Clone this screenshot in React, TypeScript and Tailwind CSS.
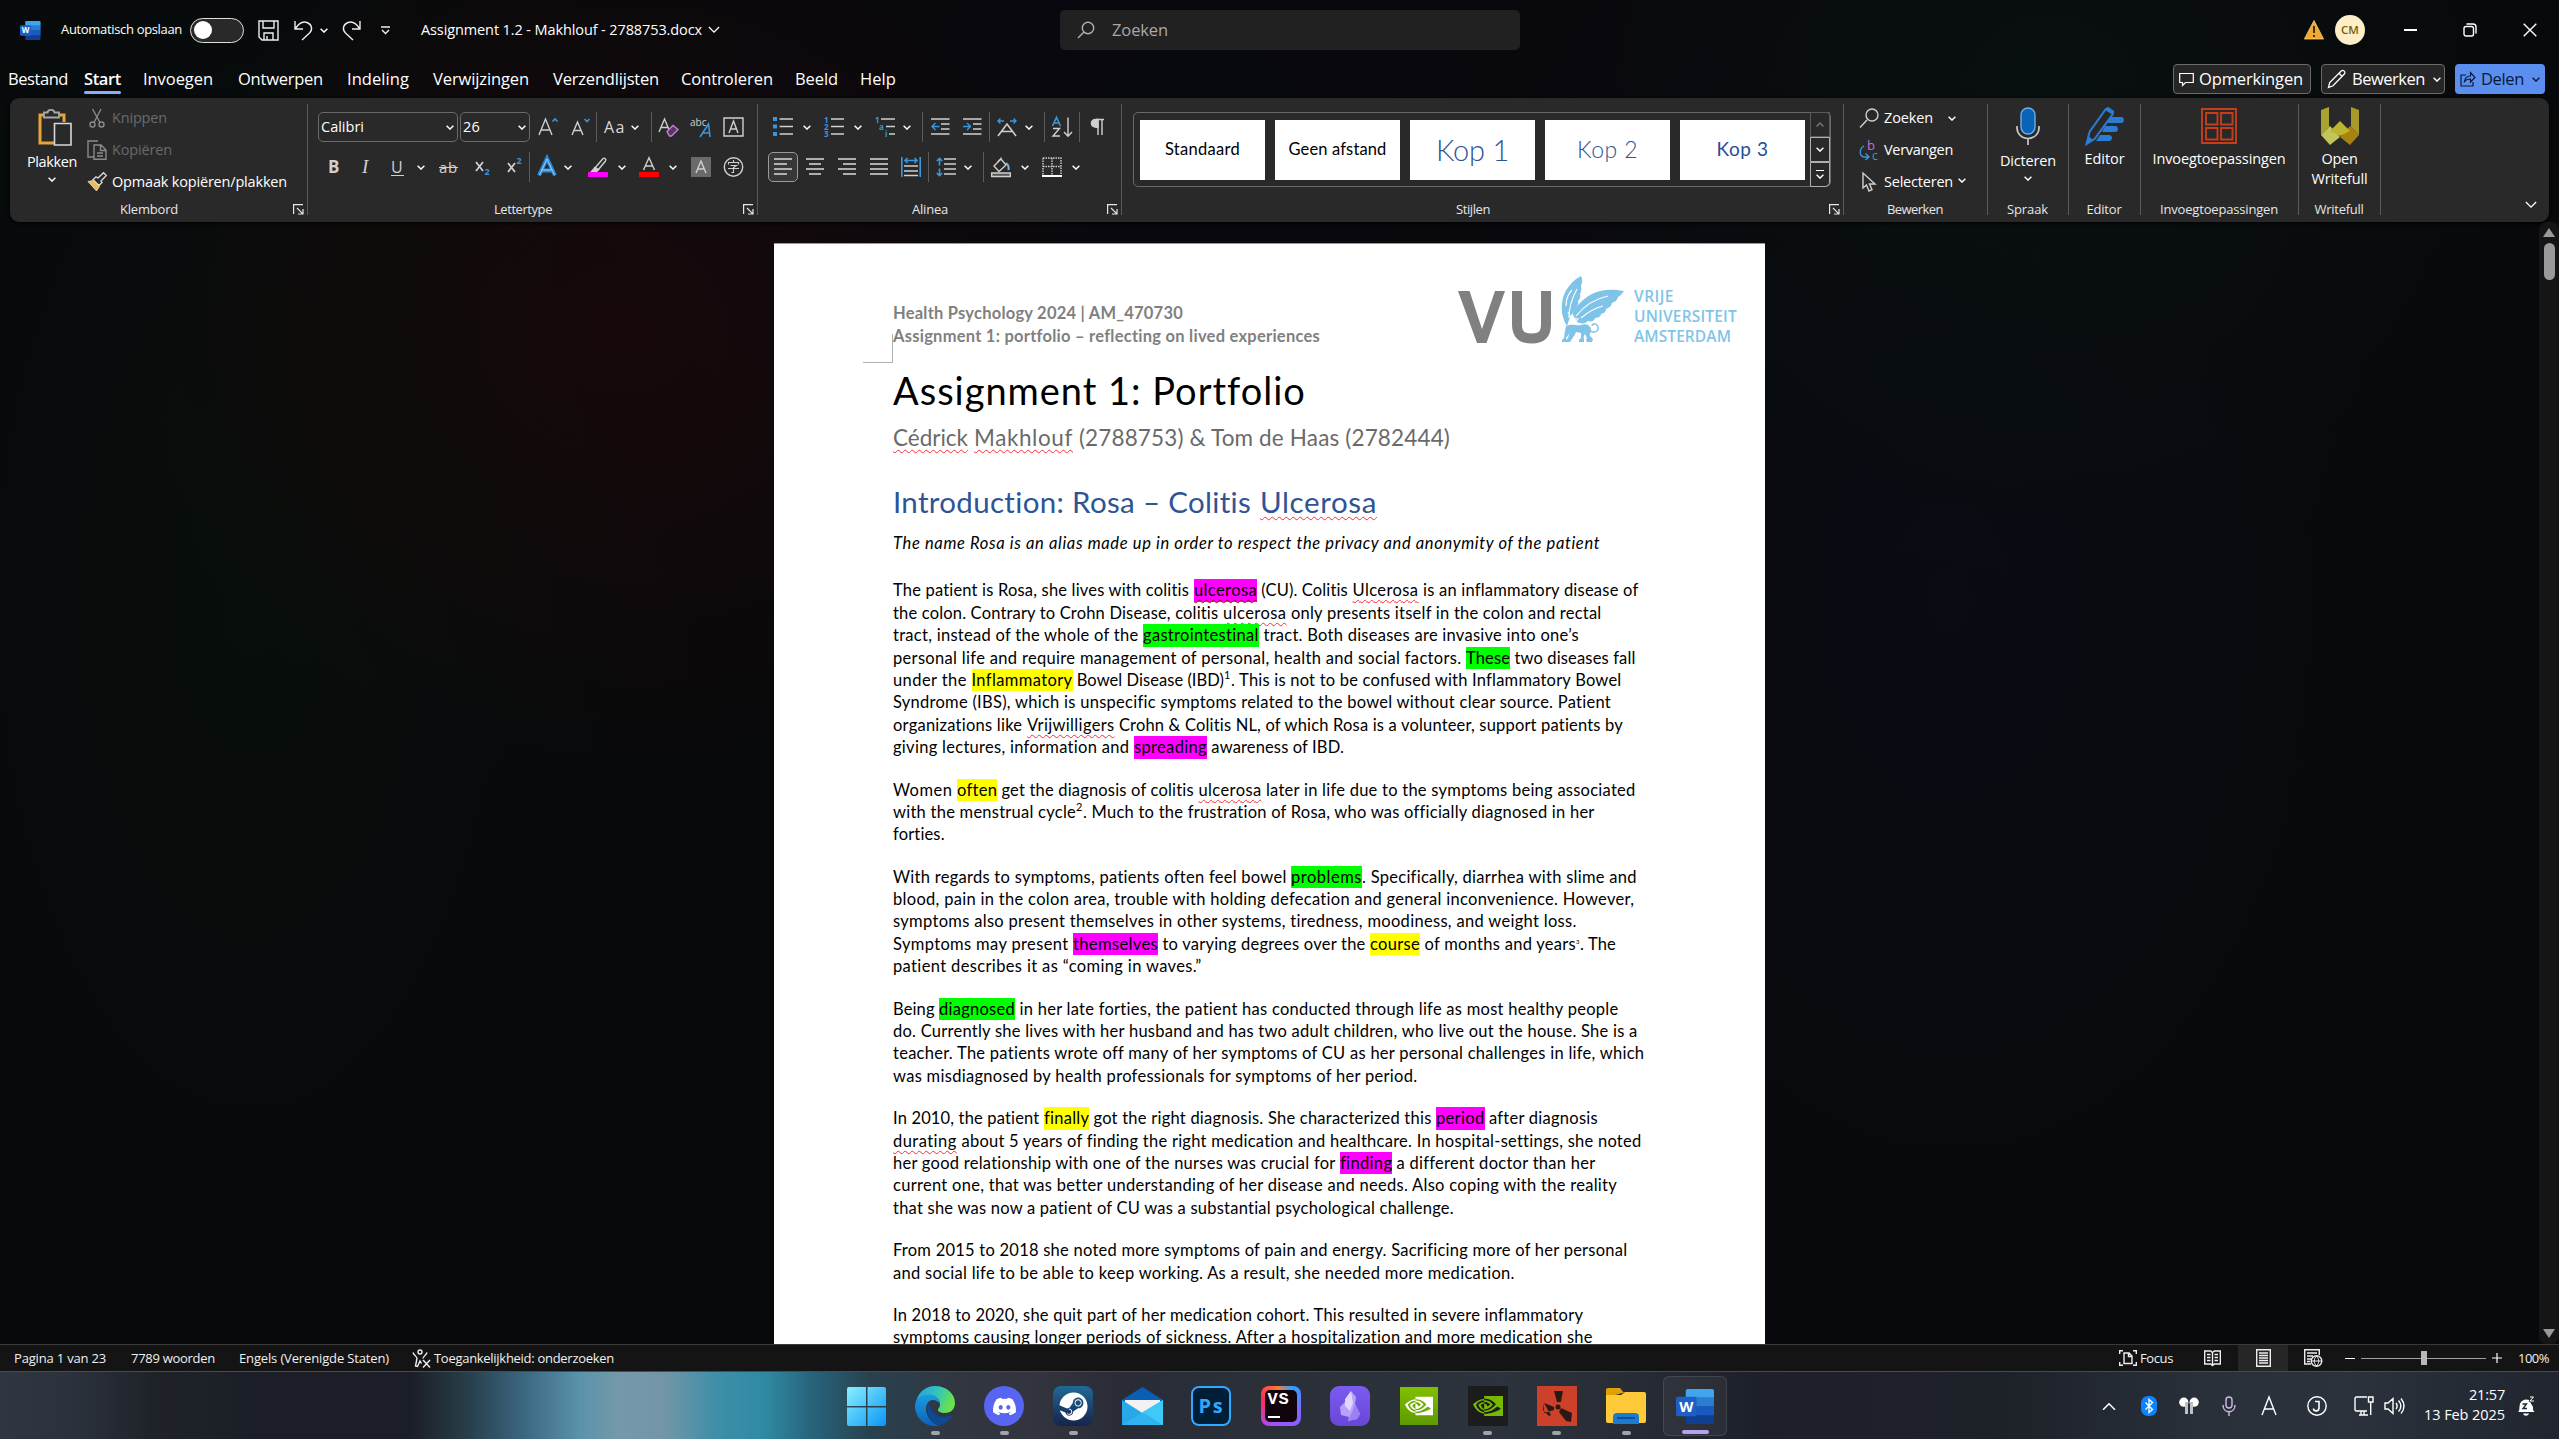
import { useLayoutEffect, useRef, type ReactNode } from "react";
import { FaDiscord, FaSteam } from "react-icons/fa";
import { SiNvidia } from "react-icons/si";

const UI = "font-['Open_Sans','Noto_Sans',sans-serif]";
const DOC = "font-[Lato,'Open_Sans',sans-serif]";

/** Text set to an exact advance width by adjusting its tracking. */
function Fit({ w, className = "", children }: { w: number; className?: string; children: string }) {
  const ref = useRef<HTMLSpanElement>(null);
  useLayoutEffect(() => {
    const el = ref.current;
    if (!el) return;
    el.style.letterSpacing = "0px";
    const natural = el.getBoundingClientRect().width;
    el.style.letterSpacing = `${(w - natural) / children.length}px`;
  }, [w, children]);
  return (
    <span className={`block shrink-0 whitespace-pre ${className}`} style={{ width: w }}>
      <span ref={ref}>{children}</span>
    </span>
  );
}

function Chev({ className = "", up = false, w = 8 }: { className?: string; up?: boolean; w?: number }) {
  return (
    <svg className={`shrink-0 ${className}`} width={w} height={(w * 5) / 8} viewBox="0 0 8 5" fill="none" stroke="currentColor" strokeWidth={w > 10 ? 0.9 : 1.4}>
      <path d={up ? "M0.6 4.4 4 1l3.4 3.4" : "M0.6 0.7 4 4.1 7.4.7"} />
    </svg>
  );
}

function Svg({ w = 20, h = 20, vb, className = "", children }: { w?: number; h?: number; vb?: string; className?: string; children: ReactNode }) {
  return (
    <svg className={`shrink-0 overflow-visible ${className}`} width={w} height={h} viewBox={vb ?? `0 0 ${w} ${h}`} fill="none" stroke="#d0d0d0" strokeWidth="1.4">
      {children}
    </svg>
  );
}

function Rule({ className = "" }: { className?: string }) {
  return <div className={`h-[30px] w-px shrink-0 bg-[#5c5c5c] ${className}`} />;
}

function Launcher() {
  return (
    <svg className="absolute right-[3px] bottom-[7px]" width="11" height="11" viewBox="0 0 11 11" fill="none" stroke="#e8e8e8" strokeWidth="1.2">
      <path d="M.6 10V.6H10M4 4l5.6 5.6M10 5v5H5" />
    </svg>
  );
}

function Group({ className, label, lw, launcher = false, children }: { className: string; label: string; lw: number; launcher?: boolean; children: ReactNode }) {
  return (
    <>
      <div className={`relative flex h-[124px] shrink-0 flex-col ${className}`}>
        <div className="h-[102px]">{children}</div>
        <div className={`flex h-[20px] items-center justify-center ${launcher ? "pr-[19px]" : "pr-[1px]"}`}>
          <Fit w={lw} className="text-[13px] text-[#e6e6e6]">{label}</Fit>
        </div>
        {launcher && <Launcher />}
      </div>
      <div className="mt-[6px] h-[111px] w-px shrink-0 bg-[#5a5a5a]" />
    </>
  );
}

function WordLogo({ size }: { size: number }) {
  return (
    <svg className="shrink-0" width={size} height={size} viewBox="0 0 40 40">
      <rect x="10" y="2" width="29" height="36" rx="2" fill="#103f91" />
      <path d="M12 2h25a2 2 0 0 1 2 2v7H10V4a2 2 0 0 1 2-2Z" fill="#41a5ee" />
      <path d="M10 11h29v9H10z" fill="#2b7cd3" />
      <path d="M10 20h29v9H10z" fill="#185abd" />
      <rect x="0" y="10" width="21" height="20" rx="2" fill="#1f5fc4" />
      <text x="10.5" y="25.6" textAnchor="middle" fill="#fff" fontFamily="Open Sans" fontWeight="700" fontSize="15">W</text>
    </svg>
  );
}

function TitleBar() {
  return (
    <div className="flex h-[60px] shrink-0 items-center text-white">
      <div className="ml-[20px]"><WordLogo size={21} /></div>
      <Fit w={121} className="ml-[20px] text-[13px]">Automatisch opslaan</Fit>
      <div className="ml-[8px] flex h-[25px] w-[54px] shrink-0 items-center rounded-full border border-[#e0e0e0] bg-[#292929] pl-[3px]">
        <div className="size-[18px] rounded-full bg-white" />
      </div>
      <Svg className="ml-[14px]" w={21} h={21}>
        <path stroke="#eee" d="M1 1h19v19H4l-3-3zM5 1v7h11V1M6 20v-7h9v7M9 20v-4" />
      </Svg>
      <Svg className="ml-[15px]" w={20} h={21}>
        <path stroke="#eee" d="M1 1v8h8M1.500 8.500C5 3 9 1 13 2.500c5 2 6 7 2.500 10.500L8 20" />
      </Svg>
      <Chev className="ml-[6px]" />
      <Svg className="ml-[14px]" w={20} h={21}>
        <path stroke="#eee" d="M18 1v8h-8M17.500 8.500C14 3 10 1 6 2.500c-5 2-6 7-2.500 10.500L11 20" />
      </Svg>
      <Svg className="ml-[19px]" w={9} h={9}>
        <path stroke="#eee" d="M0 1h9M1 4l3.500 3.500L8 4" />
      </Svg>
      <Fit w={281} className="ml-[31px] text-[14.5px]">Assignment 1.2 - Makhlouf - 2788753.docx</Fit>
      <Chev className="ml-[6px]" w={12} />
      <div className="ml-[340px] flex h-[40px] w-[460px] shrink-0 items-center rounded-[5px] bg-[#212121]">
        <Svg className="ml-[17px]" w={18} h={18}>
          <path stroke="#b0b0b0" d="M7 11 1 17" /><circle cx="11" cy="7" r="5.700" stroke="#b0b0b0" />
        </Svg>
        <Fit w={56} className="ml-[17px] text-[16.5px] text-[#a8a8a8]">Zoeken</Fit>
      </div>
      <svg className="ml-[784px] shrink-0" width="20" height="20" viewBox="0 0 20 20">
        <path d="M10 .5 19.600 19H.4z" fill="#f0a830" stroke="#f8d080" strokeWidth=".8" />
        <path d="M10 6v7M10 15v2" stroke="#4a3000" strokeWidth="2" />
      </svg>
      <div className="ml-[11px] flex size-[30px] shrink-0 items-center justify-center rounded-full bg-[#fdeec8]">
        <Fit w={18} className="text-[11.5px] font-semibold text-[#7a5b00]">CM</Fit>
      </div>
      <div className="ml-[39px] h-[1.5px] w-[13px] shrink-0 bg-white" />
      <Svg className="ml-[46px]" w={14} h={14}>
        <rect x="1" y="3.500" width="9.500" height="9.500" rx="2" stroke="#fff" />
        <path stroke="#fff" d="M3.500 1H10c2 0 3 1 3 3v6.500" />
      </Svg>
      <Svg className="ml-[46px]" w={14} h={14}><path stroke="#fff" d="m.7.7 12.600 12.600M13.300.7.7 13.300" /></Svg>
    </div>
  );
}

function TabBar() {
  return (
    <div className="flex h-[38px] shrink-0 items-center text-[16.5px] text-white">
      <Fit w={60} className="ml-[8px] pt-[1px]">Bestand</Fit>
      <div className="relative ml-[16px] pt-[1px]">
        <Fit w={37} className="font-semibold">Start</Fit>
        <div className="absolute -bottom-[2px] left-0 h-[3px] w-[37px] rounded-full bg-[#86aefa]" />
      </div>
      <Fit w={70} className="ml-[22px] pt-[1px]">Invoegen</Fit>
      <Fit w={85} className="ml-[25px] pt-[1px]">Ontwerpen</Fit>
      <Fit w={62} className="ml-[24px] pt-[1px]">Indeling</Fit>
      <Fit w={96} className="ml-[24px] pt-[1px]">Verwijzingen</Fit>
      <Fit w={106} className="ml-[24px] pt-[1px]">Verzendlijsten</Fit>
      <Fit w={92} className="ml-[22px] pt-[1px]">Controleren</Fit>
      <Fit w={43} className="ml-[22px] pt-[1px]">Beeld</Fit>
      <Fit w={36} className="ml-[22px] pt-[1px]">Help</Fit>
      <div className="ml-auto flex gap-[10px] pr-[14px]">
        <div className="flex h-[30px] w-[138px] items-center rounded-[4px] border border-[#6a6a6a] bg-[#262626]">
          <Svg className="ml-[5px]" w={15} h={15}><path stroke="#fff" strokeWidth="1.2" d="M.7 1.500h13.600v9H6.500L3.500 13.500v-3H.7z" /></Svg>
          <Fit w={104} className="ml-[5px]">Opmerkingen</Fit>
        </div>
        <div className="flex h-[30px] w-[124px] items-center rounded-[4px] border border-[#6a6a6a] bg-[#262626]">
          <Svg className="ml-[5px]" w={20} h={20}><path stroke="#fff" strokeWidth="1.3" d="m1.500 18.500 1.200-5L14 2.200c1-1 2.300-1 3.200-.1s.9 2.200-.1 3.200L6 16.800zM12 4.300l3.500 3.400" /></Svg>
          <Fit w={73} className="ml-[5px]">Bewerken</Fit>
          <Chev className="ml-[8px]" />
        </div>
        <div className="flex h-[30px] w-[90px] items-center rounded-[4px] bg-[#5b8fef] text-[#0a1a38]">
          <Svg className="ml-[5px]" w={16} h={16}><path stroke="#0a1a38" strokeWidth="1.2" d="M6 4H1v11h12V11M4.500 10.500c.5-4 3-5.500 6-5.500V1.500l4.500 5-4.500 4.500V8C8 8 6 8.500 4.500 10.500z" /></Svg>
          <Fit w={43} className="ml-[5px]">Delen</Fit>
          <Chev className="ml-[8px]" />
        </div>
      </div>
    </div>
  );
}

function Clipboard() {
  return (
    <div className="flex h-full">
      <div className="ml-[14px] flex w-[56px] flex-col items-center pt-[10px] text-white">
        <Svg w={35} h={38} className="ml-[4px]">
          <path d="M3 7h8M20 7h7v7M3 5.500V35h14" stroke="#e8a33d" strokeWidth="3" />
          <path d="M7 4.500h3.500C11 1 17 1 17.500 4.500H22V9.500H7z" fill="#292929" stroke="#a8a8a8" strokeWidth="1.800" />
          <path d="M17.500 15.500H34V37H17.500z" fill="#292929" stroke="#d8d8d8" strokeWidth="1.600" />
        </Svg>
        <Fit w={50} className="mt-[6px] text-[14.5px] leading-[20px]">Plakken</Fit>
        <Chev className="mt-[5px]" />
      </div>
      <div className="ml-[7px] flex flex-col pt-[4px] text-[14.5px]">
        <div className="flex h-[32px] items-center">
          <Svg><path stroke="#8a8a8a" d="M5.500 1 13 14.500M14 1 7 14.500" /><circle cx="5.500" cy="16.500" r="2.500" stroke="#8a8a8a" /><circle cx="14.500" cy="16.500" r="2.500" stroke="#8a8a8a" /></Svg>
          <Fit w={55} className="ml-[5px] text-[#6a6a6a]">Knippen</Fit>
        </div>
        <div className="flex h-[32px] items-center">
          <Svg><path stroke="#8a8a8a" d="M7 17H1V1h10M7 5h7l5 5v9.300H7zM13.500 5v5.500H19M10 13h6M10 16h6" /></Svg>
          <Fit w={60} className="ml-[5px] text-[#6a6a6a]">Kopiëren</Fit>
        </div>
        <div className="flex h-[32px] items-center">
          <Svg><path stroke="#d8d8d8" fill="#292929" d="m11 6 5.500-5.200 2.800 2.800L14 9l1 1.500-3 3L6 7.800l3-3z" /><path d="m1 9.500 5.500-1 6 6L9.500 19z" fill="#f0b95a" stroke="#e8e0d0" strokeWidth=".8" /></Svg>
          <Fit w={175} className="ml-[5px] text-white">Opmaak kopiëren/plakken</Fit>
        </div>
      </div>
    </div>
  );
}

function FontGroup() {
  return (
    <div className="pt-[14px] text-white">
      <div className="flex h-[30px] items-center text-[14.5px]">
        <div className="ml-[10px] flex h-[30px] w-[140px] shrink-0 items-center rounded-[5px] border border-[#6a6a6a] pr-[3px] pl-[2px]">
          <Fit w={43}>Calibri</Fit><Chev className="ml-auto" />
        </div>
        <div className="ml-[2px] flex h-[30px] w-[70px] shrink-0 items-center rounded-[5px] border border-[#6a6a6a] pr-[3px] pl-[2px]">
          <Fit w={17}>26</Fit><Chev className="ml-auto" />
        </div>
        <Svg className="ml-[8px]"><path d="m1 18 6.500-16L14 18M3 13h9" /><path d="M14.500 4.500 17 2l2.500 2.500" stroke="#3a96dd" strokeWidth="1.600" /></Svg>
        <Svg className="ml-[13px]"><path d="m1 18 5.500-13L12 18M3 13.500h7" /><path d="M13.500 2 16 4.500 18.500 2" stroke="#3a96dd" strokeWidth="1.600" /></Svg>
        <Rule className="ml-[5px]" />
        <Fit w={22} className="ml-[7px] text-[16px] text-[#d8d8d8]">Aa</Fit>
        <Chev className="ml-[5px]" />
        <Rule className="ml-[12px]" />
        <Svg className="ml-[6px]" w={22}><path d="m1 15 5.500-13L12 15M3 10.500h7" /><path d="m9 14.500 6-6 5 4-6.500 6.500h-2z" stroke="#c77dd6" fill="#5a3562" /></Svg>
        <Svg className="ml-[10px]" w={22}>
          <text x="0" y="9" fontSize="10" fill="#d0d0d0" stroke="none" fontFamily="Open Sans">abc</text>
          <path d="m10 20 8.500-13 1.500 13M13 16h7" stroke="#3a96dd" strokeWidth="1.600" />
        </Svg>
        <Svg className="ml-[11px]" w={21}><path d="M1 1h19v18H1zM6 16l4.500-12L15 16M7.500 12h6" /></Svg>
      </div>
      <div className="mt-[10px] flex h-[30px] items-center text-[18px] text-[#d0d0d0]">
        <Fit w={11} className="ml-[20px] text-[17px] font-bold">B</Fit>
        <span className="ml-[23px] w-[9px] font-['Liberation_Serif',serif] text-[19px] italic">I</span>
        <Fit w={13} className="ml-[20px] text-[16px] underline underline-offset-2">U</Fit>
        <Chev className="ml-[13px] text-white" />
        <Fit w={19} className="ml-[14px] text-[15px] line-through">ab</Fit>
        <Svg className="ml-[17px]"><path d="m1 5 7 9M8 5l-7 9" strokeWidth="1.800" /><text x="9.500" y="18" fontSize="9" fill="#3a96dd" stroke="none" fontFamily="Open Sans" fontWeight="700">2</text></Svg>
        <Svg className="ml-[12px]"><path d="m1 6 7 9M8 6l-7 9" strokeWidth="1.800" /><text x="9.500" y="7" fontSize="9" fill="#3a96dd" stroke="none" fontFamily="Open Sans" fontWeight="700">2</text></Svg>
        <Rule className="ml-[2px]" />
        <Svg className="ml-[7px]"><path d="m2 18.500 8-17 8 17M5 13.500h10" stroke="#2b88d8" strokeWidth="4" /><path d="m2.500 18 7.500-16 7.500 16M5 13h10" stroke="#9fd0f5" strokeWidth="1" /></Svg>
        <Chev className="ml-[7px] text-white" />
        <Svg className="ml-[16px]"><path d="m7 11 8-9.500c1.500-1 3.500.5 2.500 2.500L10 13z" /><path d="m7 10.500-3.500 4h5l2-1.800z" fill="#d0d0d0" /><path d="M0 15h20v5H0z" fill="#f0f" stroke="none" /></Svg>
        <Chev className="ml-[10px] text-white" />
        <Svg className="ml-[13px]"><path d="M4.500 13 10 .8 15.500 13M6.500 9h7" /><path d="M0 15h20v5H0z" fill="red" stroke="none" /></Svg>
        <Chev className="ml-[10px] text-white" />
        <Svg className="ml-[14px]"><path d="M0 0h20v20H0z" fill="#6a6a6a" stroke="none" /><path d="m5 16 5-12 5 12M7 12h6" /></Svg>
        <Svg className="ml-[12px]" w={21}>
          <circle cx="10.500" cy="10" r="9.200" /><path strokeWidth="1.100" d="M10.500 3v2.500M5.500 7.500v-2h10v2M7.500 8.500h6l-3 2V15.500H8.500M5 11.500h11" />
        </Svg>
      </div>
    </div>
  );
}

function Lines({ rows, className = "" }: { rows: [number, number][]; className?: string }) {
  return (
    <Svg w={18} h={20} className={className}>
      {rows.map(([a, b], i) => <path key={i} d={`M${a} ${2 + i * 5}H${b}`} strokeWidth="1.600" />)}
    </Svg>
  );
}

function ParagraphGroup() {
  const num = { fontFamily: "Open Sans", fontWeight: 700, fontSize: 8, fill: "#3a96dd", stroke: "none" } as const;
  return (
    <div className="pt-[14px] text-white">
      <div className="flex h-[30px] items-center">
        <Svg className="ml-[15px]"><path d="M6.500 2H20M6.500 9.500H20M6.500 17H20" /><path d="M0 0h4v4H0zM0 7.500h4v4H0zM0 15h4v4H0z" fill="#3a96dd" stroke="none" /></Svg>
        <Chev className="ml-[10px]" />
        <Svg className="ml-[13px]"><path d="M7 2h13M7 9.500h13M7 17h13" /><text x="0" y="5.500" {...num}>1</text><text x="0" y="12.500" {...num}>2</text><text x="0" y="20" {...num}>3</text></Svg>
        <Chev className="ml-[10px]" />
        <Svg className="ml-[13px]"><path d="M6 2h14M11 9.500h9M14 17h6" /><text x="0" y="5.500" {...num}>1</text><text x="4" y="12.500" {...num}>a</text><text x="10" y="20" {...num}>i</text></Svg>
        <Chev className="ml-[8px]" />
        <Rule className="ml-[11px]" />
        <Svg className="ml-[8px]" w={19}><path d="M0 2h18.500M10 7h8.500M10 12h8.500M0 17h18.500" /><path d="M8.500 9.500H1M4.500 6 1 9.500 4.500 13" stroke="#3a96dd" /></Svg>
        <Svg className="ml-[13px]" w={19}><path d="M0 2h18.500M10 7h8.500M10 12h8.500M0 17h18.500" /><path d="M0 9.500h7.500M4 6l3.500 3.500L4 13" stroke="#3a96dd" /></Svg>
        <Rule className="ml-[7px]" />
        <Svg className="ml-[7px]"><path d="M1 19 10 7l9 12M5 14.500h10" strokeWidth="1.600" /><path d="M7 4H1M3.500 1.500 1 4l2.500 2.500M13 4h6M16.500 1.500 19 4l-2.500 2.500" stroke="#3a96dd" /></Svg>
        <Chev className="ml-[8px]" />
        <Rule className="ml-[11px]" />
        <Svg className="ml-[7px]"><path d="m.5 9 4-8.500 4 8.500M2 6h5" stroke="#3a96dd" strokeWidth="1.600" /><path d="M1 11.500h6.500L1 19h7M16 .5V19M12 15l4 4.200 4-4.200" /></Svg>
        <Rule className="ml-[7px]" />
        <Svg className="ml-[10px]" w={14}><path d="M6 2.500h8M8 2.500V18M12 2.500V18" /><path d="M8 2.500v8C-.5 10.500-.5 2.500 6 2.500z" fill="#d0d0d0" /></Svg>
      </div>
      <div className="mt-[10px] flex h-[30px] items-center">
        <div className="ml-[10px] flex size-[30px] shrink-0 items-center justify-center rounded-[5px] border border-[#9a9a9a] bg-[#383838]">
          <Lines rows={[[0, 18], [0, 13], [0, 18], [0, 13]]} />
        </div>
        <Lines className="ml-[8px]" rows={[[0, 18], [3, 15], [0, 18], [3, 15]]} />
        <Lines className="ml-[14px]" rows={[[0, 18], [5, 18], [0, 18], [5, 18]]} />
        <Lines className="ml-[14px]" rows={[[0, 18], [0, 18], [0, 18], [0, 18]]} />
        <Svg className="ml-[13px]"><path d="M3 9h14M3 14h14M3 18.500h14" /><path d="M.8 0v20M19.200 0v20M4 3.500h12M6.500 1 4 3.500 6.500 6M13.500 1 16 3.500 13.500 6" stroke="#3a96dd" strokeWidth="1.600" /></Svg>
        <Rule className="ml-[7px]" />
        <Svg className="ml-[7px]"><path d="M8 2h12M8 7h12M8 12h12M8 17h12" /><path d="M3.500 1.500v7M3.500 11.500v7M.8 4l2.700-2.700L6.200 4M.8 16l2.700 2.700L6.200 16" stroke="#3a96dd" strokeWidth="1.600" /></Svg>
        <Chev className="ml-[8px]" />
        <Rule className="ml-[11px]" />
        <Svg className="ml-[7px]"><path d="m3 9 7-7 5 6-7 6.500zM10 2V.5M6.500 5l3-3" /><path d="M15 6c3 2 3 4 2.500 7" stroke="#7ab8e8" strokeWidth="2" /><path d="M.7 16h18.600v3.500H.7z" fill="#555" /></Svg>
        <Chev className="ml-[10px]" />
        <Svg className="ml-[13px]"><path d="M1 1h18v17M1 1v17M10 1v17M1 9.500h18" strokeDasharray="1.500 1" /><path d="M0 19h20" strokeWidth="2" stroke="#fff" /></Svg>
        <Chev className="ml-[10px]" />
      </div>
    </div>
  );
}

function StyleTile({ className, w, children }: { className: string; w: number; children: string }) {
  return (
    <div className="flex h-[60px] w-[125px] shrink-0 items-center justify-center bg-white">
      <Fit w={w} className={className}>{children}</Fit>
    </div>
  );
}

function StylesGroup() {
  return (
    <div className="pt-[14px] pl-[11px]">
      <div className={`flex h-[75px] w-[698px] items-center gap-[10px] rounded-[5px] border border-[#6a6a6a] pl-[6px] ${DOC}`}>
        <StyleTile w={75} className="text-[16.5px] text-black">Standaard</StyleTile>
        <StyleTile w={98} className="text-[16.5px] text-black">Geen afstand</StyleTile>
        <StyleTile w={73} className="text-[29px] font-light text-[#2f5496]">Kop 1</StyleTile>
        <StyleTile w={61} className="text-[23px] font-light text-[#2f5496]">Kop 2</StyleTile>
        <StyleTile w={52} className="text-[19px] text-[#1f4e9a]">Kop 3</StyleTile>
        <div className="-ml-[5px] flex h-[75px] w-[20px] flex-col text-white">
          <div className="flex h-[25px] items-center justify-center border border-[#5a5a5a] text-[#777]"><Chev up /></div>
          <div className="flex h-[25px] items-center justify-center border border-[#b0b0b0]"><Chev /></div>
          <div className="flex h-[25px] flex-col items-center justify-center gap-[3px] rounded-br-[5px] border border-[#b0b0b0]">
            <div className="h-px w-[8px] bg-white" /><Chev />
          </div>
        </div>
      </div>
    </div>
  );
}

function EditGroup() {
  return (
    <div className="flex flex-col pt-[4px] pl-[15px] text-[14.5px] text-white">
      <div className="flex h-[32px] items-center">
        <Svg><path d="M8 12 1 19.500" /><circle cx="13" cy="7" r="6" /></Svg>
        <Fit w={49} className="ml-[5px]">Zoeken</Fit><Chev className="ml-[15px]" />
      </div>
      <div className="flex h-[32px] items-center">
        <Svg>
          <text x="8" y="10" fontSize="13" fill="#c470cf" stroke="none" fontFamily="Open Sans">b</text>
          <text x="13" y="20" fontSize="12" fill="#3a96dd" stroke="none" fontFamily="Open Sans">c</text>
          <path d="M5 6C0 9 0 16 5 17h4M6.500 13.500 10 17l-3.500 3" stroke="#3a96dd" />
        </Svg>
        <Fit w={69} className="ml-[5px]">Vervangen</Fit>
      </div>
      <div className="flex h-[32px] items-center">
        <Svg><path d="M4 1v15l3.500-3 2.500 6 3-1.300-2.500-5.700H16z" /></Svg>
        <Fit w={69} className="ml-[5px]">Selecteren</Fit><Chev className="mb-[3px] ml-[5px]" />
      </div>
    </div>
  );
}

function Ribbon() {
  return (
    <div className="mx-[10px] flex h-[124px] shrink-0 rounded-[9px] bg-[#292929] shadow-[0_1px_4px_#000]">
      <Group className="w-[297px]" label="Klembord" lw={58} launcher><Clipboard /></Group>
      <Group className="w-[449px]" label="Lettertype" lw={58} launcher><FontGroup /></Group>
      <Group className="w-[363px]" label="Alinea" lw={36} launcher><ParagraphGroup /></Group>
      <Group className="w-[721px]" label="Stijlen" lw={34} launcher><StylesGroup /></Group>
      <Group className="w-[143px]" label="Bewerken" lw={56}><EditGroup /></Group>
      <Group className="w-[80px]" label="Spraak" lw={41}>
        <div className="flex flex-col items-center pt-[9px] text-white">
          <Svg w={24} h={38}>
            <rect x="5" y="1" width="14" height="26" rx="7" fill="#0a63b5" stroke="#6ab0ea" />
            <path d="M1 19v2c0 6 5 10.500 11 10.500S23 27 23 21v-2M12 31.500V38" stroke="#c8c8c8" strokeWidth="1.700" />
          </Svg>
          <Fit w={56} className="mt-[6px] text-[14.5px] leading-[20px]">Dicteren</Fit>
          <Chev className="mt-[5px]" />
        </div>
      </Group>
      <Group className="w-[71px]" label="Editor" lw={35}>
        <div className="flex flex-col items-center pt-[9px] text-white">
          <Svg w={40} h={38}>
            <path d="M24 10h12c4 0 4 6 0 6h-13zM20 19h10c4 0 4 6 0 6H17zM15 28h9c4 0 4 6 0 6H11z" fill="#2b7cd3" stroke="none" />
            <path d="m1.500 37 3-12L20.500 2.500 23 1l5 3.500-.5 3L9.500 32z" fill="#292929" stroke="#2b7cd3" strokeWidth="2" />
            <path d="m20 3 3-2.500 6 4-1 3.500zM1 38l2.500-9L8 33z" fill="#2b7cd3" stroke="none" />
          </Svg>
          <Fit w={40} className="mt-[4px] text-[14.5px] leading-[20px]">Editor</Fit>
        </div>
      </Group>
      <Group className="w-[157px]" label="Invoegtoepassingen" lw={118}>
        <div className="flex flex-col items-center pt-[10px] pr-[1px] text-white">
          <Svg w={36} h={36}><path d="M1 1h34v34H1zM5 5h11.500v11.500H5zM20 5h11.500v11.500H20zM5 20h11.500v11.500H5zM20 20h11.500v11.500H20z" stroke="#c43e1c" strokeWidth="1.900" /></Svg>
          <Fit w={133} className="mt-[5px] text-[14.5px] leading-[20px]">Invoegtoepassingen</Fit>
        </div>
      </Group>
      <Group className="w-[81px]" label="Writefull" lw={49}>
        <div className="flex flex-col items-center pt-[9px] text-white">
          <Svg w={38} h={38}>
            <g stroke="none">
              <path d="M0 3 8 0v20L0 28z" fill="#a9a42e" /><path d="M38 3 30 0v20l8 8z" fill="#a79a2b" />
              <path d="m0 28 9-9 10 11-10 8z" fill="#c2c45c" /><path d="m38 28-9-9-10 11 10 8z" fill="#a8810f" />
              <path d="M9 24 19 14l10 10-10 5z" fill="#bdb52c" />
            </g>
          </Svg>
          <Fit w={36} className="mt-[4px] text-[14.5px] leading-[20px]">Open</Fit>
          <Fit w={56} className="text-[14.5px] leading-[20px]">Writefull</Fit>
        </div>
      </Group>
      <Chev w={12} className="mt-[103px] mr-[12px] ml-auto text-white" />
    </div>
  );
}

type Seg = [string, number, ("m" | "g" | "y" | "u" | "mu" | "sup" | "tiny")?];

const MARK: Record<string, string> = {
  m: "bg-[#ff00ff]",
  g: "bg-[#00ff00]",
  y: "bg-[#ffff00]",
  u: "underline decoration-red-500 decoration-wavy decoration-1 underline-offset-[3px] [text-decoration-skip-ink:none]",
  mu: "bg-[#ff00ff] underline decoration-red-800 decoration-wavy decoration-1 underline-offset-[3px] [text-decoration-skip-ink:none]",
  sup: "text-[11px] -mt-[5px]",
  tiny: "text-[6px] -mt-[2px]",
};

function Line({ segs, className = "" }: { segs: Seg[]; className?: string }) {
  return (
    <div className={`flex ${className}`}>
      {segs.map(([t, w, k], i) => <Fit key={i} w={w} className={k ? MARK[k] : ""}>{t}</Fit>)}
    </div>
  );
}

const BODY: Seg[][][] = [
  [
    [["The patient is Rosa, she lives with colitis ", 301], ["ulcerosa", 63, "mu"], [" (CU). Colitis ", 95.5], ["Ulcerosa", 66, "u"], [" is an inflammatory disease of", 220]],
    [["the colon. Contrary to Crohn Disease, colitis ", 330], ["ulcerosa", 63.5, "u"], [" only presents itself in the colon and rectal", 315]],
    [["tract, instead of the whole of the ", 250], ["gastrointestinal", 116, "g"], [" tract. Both diseases are invasive into one’s", 320]],
    [["personal life and require management of personal, health and social factors. ", 573], ["These", 44, "g"], [" two diseases fall", 125.5]],
    [["under the ", 78.5], ["Inflammatory", 101, "y"], [" Bowel Disease (IBD)", 151.500], ["1", 7, "sup"], [". This is not to be confused with Inflammatory Bowel", 390.5]],
    [["Syndrome (IBS), which is unspecific symptoms related to the bowel without clear source. Patient", 718]],
    [["organizations like ", 134], ["Vrijwilligers", 87.500, "u"], [" Crohn & Colitis NL, of which Rosa is a volunteer, support patients by", 509]],
    [["giving lectures, information and ", 241], ["spreading", 73, "m"], [" awareness of IBD.", 137]],
  ],
  [
    [["Women ", 64], ["often", 40, "y"], [" get the diagnosis of colitis ", 201.500], ["ulcerosa", 63, "u"], [" later in life due to the symptoms being associated", 374]],
    [["with the menstrual cycle", 183], ["2", 7, "sup"], [". Much to the frustration of Rosa, who was officially diagnosed in her", 511]],
    [["forties.", 52]],
  ],
  [
    [["With regards to symptoms, patients often feel bowel ", 398], ["problems", 71, "g"], [". Specifically, diarrhea with slime and", 274.5]],
    [["blood, pain in the colon area, trouble with holding defecation and general inconvenience. However,", 741.5]],
    [["symptoms also present themselves in other systems, tiredness, moodiness, and weight loss.", 684]],
    [["Symptoms may present ", 180], ["themselves", 85, "m"], [" to varying degrees over the ", 212], ["course", 50, "y"], [" of months and years", 156], ["3", 4, "tiny"], [". The", 36]],
    [["patient describes it as “coming in waves.”", 309]],
  ],
  [
    [["Being ", 46], ["diagnosed", 76, "g"], [" in her late forties, the patient has conducted through life as most healthy people", 604]],
    [["do. Currently she lives with her husband and has two adult children, who live out the house. She is a", 744.5]],
    [["teacher. The patients wrote off many of her symptoms of CU as her personal challenges in life, which", 751]],
    [["was misdiagnosed by health professionals for symptoms of her period.", 524.5]],
  ],
  [
    [["In 2010, the patient ", 151], ["finally", 45, "y"], [" got the right diagnosis. She characterized this ", 347], ["period", 48.500, "m"], [" after diagnosis", 113]],
    [["durating", 64, "u"], [" about 5 years of finding the right medication and healthcare. In hospital-settings, she noted", 684]],
    [["her good relationship with one of the nurses was crucial for ", 447], ["finding", 52, "m"], [" a different doctor than her", 203]],
    [["current one, that was better understanding of her disease and needs. Also coping with the reality", 723.5]],
    [["that she was now a patient of CU was a substantial psychological challenge.", 561.5]],
  ],
  [
    [["From 2015 to 2018 she noted more symptoms of pain and energy. Sacrificing more of her personal", 734]],
    [["and social life to be able to keep working. As a result, she needed more medication.", 622]],
  ],
  [
    [["In 2018 to 2020, she quit part of her medication cohort. This resulted in severe inflammatory", 690.5]],
    [["symptoms causing longer periods of sickness. After a hospitalization and more medication she", 700]],
  ],
];

function VuLogo() {
  return (
    <div className={`absolute top-[32px] left-[683px] flex ${UI}`}>
      <svg width="170" height="70" viewBox="0 0 170 70" fill="none">
        <path d="M1 15h11.500L25 53l13-38h10L29.500 67h-9.500z" fill="#808080" />
        <path d="M60 15v33c0 10 4 14.500 14.500 14.500S89 58 89 48V15" stroke="#808080" strokeWidth="10" />
        <g fill="#7fc4e8">
          <path d="M124 0c2 4 1 7 0 10 1 3 0 6-1 8 1 2 0 5-2 7 1 3-1 5-2 7l-3 4c-2 3-4 7-6 14-4-6-6-15-5-22 1-10 4-14 8-19 3-4 7-7 11-9Z" />
          <path d="M167 15c-2 3-4 5-6 6-1 4-4 5-6 6-1 4-4 5-6 6 0 4-3 4-5 5 0 3-4 4-6 4 0 3-4 4-7 3-3 3-7 3-11 1l-5-9c6-9 12-15 20-19 10-5 20-5 32-3Z" />
          <path d="M109 50c6-3 11 0 15-1 5-2 9 0 10 4 0 4-2 5-1 7l3 3-1 3h-5l-1-2 1-2-2-4c-1 2-2 3-1 5v3h-5v-2l2-2 0-5-5-1c-1 3-3 5-4 7l-2 3h-4v-2l2-2 2-6c-1 3-3 4-4 6v4h-4v-2l2-2 1-7z" />
        </g>
        <path d="M133 55c6 3 9-1 8-4-1-4-6-4-6-1" stroke="#7fc4e8" strokeWidth="1.500" />
        <path d="M112 42c0-12 3-20 8-29M109 30c0-7 2-12 6-16M119 40c8-10 18-17 32-20M124 42c7-6 14-10 22-12M111 36l3 6 7 1-3 4" stroke="#fff" strokeWidth="1.100" />
      </svg>
      <div className="ml-[7px] pt-[11px] text-[15.500px] leading-[19.800px] font-semibold text-[#7fc4e8]">
        <Fit w={40}>VRIJE</Fit>
        <Fit w={103}>UNIVERSITEIT</Fit>
        <Fit w={97}>AMSTERDAM</Fit>
      </div>
    </div>
  );
}

function Page() {
  return (
    <div className={`relative h-[1101px] w-[991px] shrink-0 overflow-hidden border-t border-[#9a9a9a] bg-white pl-[119px] text-black ${DOC}`}>
      <VuLogo />
      <div className="absolute top-[90px] left-[89px] h-[29px] w-[30px] border-r border-b border-[#b0b0b0]" />
      <div className="h-[106px] pt-[58px] text-[16.500px] leading-[23.400px] font-bold text-[#808080]">
        <Fit w={290}>Health Psychology 2024 | AM_470730</Fit>
        <Fit w={427}>Assignment 1: portfolio – reflecting on lived experiences</Fit>
      </div>
      <Fit w={412} className="mt-[16px] text-[38px] leading-[48px]">Assignment 1: Portfolio</Fit>
      <Line
        className="mt-[10px] text-[22.500px] leading-[28px] text-[#6a6a6a]"
        segs={[["Cédrick", 75, "u"], [" ", 6], ["Makhlouf", 99, "u"], [" (2788753) & Tom de Haas (2782444)", 377]]}
      />
      <Line className="mt-[32px] text-[29.500px] leading-[36px] text-[#2f5496]" segs={[["Introduction: Rosa – Colitis ", 367], ["Ulcerosa", 117, "u"]]} />
      <Fit w={707} className="mt-[12px] text-[16.500px] leading-[22.400px] italic">The name Rosa is an alias made up in order to respect the privacy and anonymity of the patient</Fit>
      <div className="mt-[25px] flex flex-col gap-[20px] text-[16.500px] leading-[22.400px]">
        {BODY.map((p, i) => (
          <div key={i}>
            {p.map((l, j) => <Line key={j} segs={l} className="h-[22.400px]" />)}
          </div>
        ))}
      </div>
    </div>
  );
}

function Workspace() {
  return (
    <div className="flex h-[1122px] shrink-0 overflow-hidden">
      <div className="flex w-[2539px] justify-start pt-[21px] pl-[774px]"><Page /></div>
      <div className="flex w-[20px] flex-col items-center rounded-[8px] bg-[#151515]">
        <svg className="mt-[6px]" width="12" height="9" viewBox="0 0 12 9"><path d="M6 0 12 9H0z" fill="#9a9a9a" /></svg>
        <div className="mt-[6px] h-[37px] w-[11px] rounded-full bg-[#9a9a9a]" />
        <svg className="mt-auto mb-[6px]" width="12" height="9" viewBox="0 0 12 9"><path d="M0 0h12L6 9z" fill="#9a9a9a" /></svg>
      </div>
    </div>
  );
}

function StatusBar() {
  return (
    <div className="flex h-[28px] shrink-0 items-center border-t border-b border-t-[#3a3a3a] border-b-[#4a4a4a] bg-[#141414] text-[13px] text-[#f0f0f0]">
      <Fit w={92} className="ml-[14px] pt-[1px]">Pagina 1 van 23</Fit>
      <Fit w={84} className="ml-[25px] pt-[1px]">7789 woorden</Fit>
      <Fit w={150} className="ml-[24px] pt-[1px]">Engels (Verenigde Staten)</Fit>
      <Svg className="ml-[23px]" w={19} h={19}><circle cx="8" cy="3" r="2" stroke="#eee" /><path stroke="#eee" d="M1 3.500c1 3 4 4 4 6L3.500 17l2 .5L8 12l1.500 2.500M15 3.500c-1 3-4 4-4 6M11 11l7 7.500M18 11l-7 7.500" /></Svg>
      <Fit w={180} className="ml-[3px] pt-[1px]">Toegankelijkheid: onderzoeken</Fit>
      <Svg className="ml-[1505px]" w={18} h={16}><path stroke="#eee" d="M.7 4V.7H4M14 .7h3.300V4M.7 12v3.300H4M14 15.300h3.300V12M5 3h5l3 3v7.500H5zM9.500 3v3.500H13" /></Svg>
      <Fit w={33} className="ml-[3px] pt-[1px]">Focus</Fit>
      <Svg className="ml-[31px]" w={17} h={16}><path stroke="#eee" d="M8.500 2.500V16M.7 1h6l1.800 1.500L10.300 1h6v13h-6l-1.800 1.500L6.700 14h-6zM3 4.500h3.500M3 7.500h3.500M3 10.500h3.500M10.500 4.500H14M10.500 7.500H14M10.500 10.500H14" /></Svg>
      <div className="ml-[17px] flex h-[26px] w-[50px] shrink-0 items-center justify-center bg-[#262626]">
        <Svg w={15} h={18}><path stroke="#eee" d="M.7.7h13.600v16.600H.7zM3 4h9M3 6.500h9M3 9h9M3 11.500h9M3 14h9" /></Svg>
      </div>
      <Svg className="ml-[16px]" w={19} h={18}><path stroke="#eee" d="M7 15H.7V.7h14.600V6M3 4h10M3 7h6M3 10h4M3 12.500h3" /><circle cx="12.500" cy="12" r="5.300" stroke="#eee" fill="#141414" /><path stroke="#eee" strokeWidth="1" d="M7 12h11M12.500 7c-3 3-3 7 0 10M12.500 7c3 3 3 7 0 10" /></Svg>
      <div className="ml-[22px] h-px w-[10px] shrink-0 bg-white" />
      <div className="ml-[6px] flex h-[14px] w-[125px] shrink-0 items-center justify-center bg-[linear-gradient(#a0a0a0,#a0a0a0)] bg-[length:100%_1px] bg-center bg-no-repeat">
        <div className="h-[14px] w-[6px] bg-[#b8b8b8]" />
      </div>
      <Svg className="ml-[6px]" w={10} h={10}><path stroke="#fff" strokeWidth="1.200" d="M0 5h10M5 0v10" /></Svg>
      <Fit w={31} className="ml-[16px] pt-[1px]">100%</Fit>
    </div>
  );
}

function DockItem({ children, dot = false, active = false }: { children: ReactNode; dot?: boolean; active?: boolean }) {
  return (
    <div className={`relative flex h-[60px] w-[64px] shrink-0 items-center justify-center rounded-[6px] ${active ? "border border-white/10 bg-white/5" : ""}`}>
      {children}
      {dot && <div className={`absolute bottom-[1px] h-[4px] rounded-full ${active ? "w-[27px] bg-[#b4a5e8]" : "w-[9px] bg-[#a0a4aa]"}`} />}
    </div>
  );
}

function Dock() {
  return (
    <div className="ml-[834px] flex shrink-0 gap-[5.100px]">
      <DockItem>
        <svg width="39" height="39" viewBox="0 0 39 39">
          <defs><linearGradient id="win" x1="0" y1="0" x2="1" y2="1"><stop stopColor="#8af0ff" /><stop offset="1" stopColor="#0a95f5" /></linearGradient></defs>
          <path d="M2 0h17v19H0V2a2 2 0 0 1 2-2ZM20.500 0H37a2 2 0 0 1 2 2v17H20.500zM0 20.500h19V39H2a2 2 0 0 1-2-2zM20.500 20.500H39V37a2 2 0 0 1-2 2H20.500z" fill="url(#win)" />
        </svg>
      </DockItem>
      <DockItem dot>
        <svg width="40" height="40" viewBox="0 0 40 40">
          <defs>
            <linearGradient id="e1" x1="0" y1="0" x2="1" y2=".3"><stop stopColor="#1f9de0" /><stop offset=".6" stopColor="#35c8b8" /><stop offset="1" stopColor="#6ae04a" /></linearGradient>
            <linearGradient id="e2" x1="0" y1="0" x2="0" y2="1"><stop stopColor="#1b9de2" /><stop offset="1" stopColor="#0f5fb8" /></linearGradient>
          </defs>
          <path d="M1 16C3 6 11 0 20 0c12 0 20 8 20 17 0 6-4 10-10 10-5 0-7-2-7-3 0-2 2-2 2-6 0-5-5-9-11-9C8 9 3 12 1 16Z" fill="url(#e1)" />
          <path d="M0 20C0 13 6 8.500 13 8.500c7 0 12 4 12 9.500-1-2-4-4-7-4-5 0-7 5-7 9 0 8 6 14 13 17C10 42 0 32 0 20Z" fill="url(#e2)" />
          <path d="M14.500 17C10 24 13 36 24 39.500c5-1 10-4.500 13-9 .5-1-.5-1.500-1-1-7 3-20 2-21.500-12.500Z" fill="#0c4a94" />
        </svg>
      </DockItem>
      <DockItem dot><div className="flex size-[40px] items-center justify-center rounded-full bg-[#5865f2]"><FaDiscord className="size-[25px] text-white" /></div></DockItem>
      <DockItem dot><div className="flex size-[40px] items-center justify-center rounded-[8px] bg-linear-to-b from-[#1f6a98] to-[#14244c]"><FaSteam className="size-[29px] text-white" /></div></DockItem>
      <DockItem>
        <svg width="41" height="38" viewBox="0 0 41 38">
          <path d="M0 13 20.500 0 41 13v8H0z" fill="#0a5fb4" /><path d="M3 13h35v10L20.500 30 3 23z" fill="#f2f2f2" />
          <path d="M0 13v25h41V13L20.500 26z" fill="#28a8ea" /><path d="M41 13v25L20.500 25z" fill="#50d9ff" /><path d="M0 38 41 13v25z" fill="#35bdf2" opacity=".6" />
        </svg>
      </DockItem>
      <DockItem>
        <div className="flex size-[40px] items-center justify-center rounded-[8px] border-2 border-[#31a8ff] bg-[#001e36]">
          <Fit w={26} className="text-[20px] leading-[30px] font-bold text-[#31a8ff]">Ps</Fit>
        </div>
      </DockItem>
      <DockItem>
        <div className="size-[40px] rounded-[8px] bg-[conic-gradient(from_200deg,#a050ff,#ff2a5a_90deg,#ff7a30_150deg,#2fa0ff_190deg,#7a6aff_260deg,#a050ff)] p-[4px]">
          <div className="h-[32px] w-[32px] rounded-[5px] bg-[#12040c] pl-[3px]">
            <Fit w={22} className="font-['Liberation_Mono',monospace] text-[17px] leading-[20px] font-bold text-white">VS</Fit>
            <div className="mt-[6px] h-[2px] w-[12px] bg-white" />
          </div>
        </div>
      </DockItem>
      <DockItem>
        <div className="flex size-[40px] items-center justify-center rounded-[9px] bg-linear-to-b from-[#7b5cf0] to-[#6846d8]">
          <svg width="22" height="30" viewBox="0 0 22 30"><path d="m12 0 5 6-1 7 5 10-3 5-9 2 1-4-8-2-1-8 5-5z" fill="#b7a2fa" /><path d="m12 0-6 8v7l5 5 3-8z" fill="#e0d6ff" /><path d="m16 13 5 10-3 5-9 2 5-11z" fill="#9a80f4" /></svg>
        </div>
      </DockItem>
      <DockItem>
        <div className="flex size-[38px] items-center justify-center bg-linear-to-b from-[#80c000] to-[#5f9a00]">
          <SiNvidia className="size-[28px] text-white" />
        </div>
      </DockItem>
      <DockItem dot>
        <div className="flex size-[40px] items-center justify-center bg-[#1c1c1c]">
          <SiNvidia className="size-[30px] text-[#76b900]" />
        </div>
      </DockItem>
      <DockItem dot>
        <svg width="40" height="40" viewBox="0 0 40 40">
          <path d="M0 0h40v40H0z" fill="#cd412b" />
          <path d="M17 5h9l-2 11h-4zM7 17l10 4v3L7 27zM7 17l-1 7 6 6 2-1-3-5zM24 22l11 5-1 9-5-1-7-9z" fill="#2a1a16" /><circle cx="21" cy="21" r="2.500" fill="#2a1a16" />
        </svg>
      </DockItem>
      <DockItem dot>
        <svg width="40" height="36" viewBox="0 0 40 36"><path d="M0 2a2 2 0 0 1 2-2h12l4 5h-2L0 10z" fill="#e0a000" /><path d="M0 7h15l4-3h19a2 2 0 0 1 2 2v27a2 2 0 0 1-2 2H2a2 2 0 0 1-2-2z" fill="#ffca3a" /><path d="M7 36V29a4 4 0 0 1 4-4h18a4 4 0 0 1 4 4v7z" fill="#1a7bd0" /><path d="M11 30h18" stroke="#0b4f96" strokeWidth="2" /></svg>
      </DockItem>
      <DockItem dot active><WordLogo size={39} /></DockItem>
    </div>
  );
}

function Tray() {
  return (
    <div className="ml-auto flex shrink-0 items-center pr-[24px] text-white">
      <Chev up w={14} />
      <svg className="ml-[25px]" width="16" height="20" viewBox="0 0 16 20"><rect width="16" height="20" rx="7" fill="#0a84ff" /><path d="m4.500 6.500 7 7L8 16.500v-13l3.500 3-7 7" fill="none" stroke="#fff" strokeWidth="1.300" /></svg>
      <svg className="ml-[22px]" width="20" height="18" viewBox="0 0 20 18"><circle cx="4.800" cy="5.200" r="4.600" fill="#fff" /><circle cx="15.200" cy="5.200" r="4.600" fill="#fff" /><path d="M6 5h3v12H6zM11 5h3v12h-3z" fill="#c0c0c0" /></svg>
      <Svg className="ml-[23px]" w={14} h={20}><rect x="4" y="1" width="6" height="11" rx="3" stroke="#d0b8e8" /><path d="M1 9c0 9 12 9 12 0M7 16v4" stroke="#d0b8e8" /></Svg>
      <Svg className="ml-[25px]" w={16} h={20}><path d="M1 19 8 1l7 18M3.500 13h9" stroke="#fff" /></Svg>
      <Svg className="ml-[30px]" w={20} h={20}><circle cx="10" cy="10" r="9.200" stroke="#fff" /><path d="M8 5.500h4V12c0 4-5.500 3.500-5.500.5" stroke="#fff" strokeWidth="1.600" /></Svg>
      <Svg className="ml-[27px]" w={20} h={20}><path d="M13 1H2.500C1.500 1 1 1.500 1 2.500v11c0 1 .5 1.500 1.500 1.500H13M7 15v4M10 15v4M5 19h9M14.500 1H19v5h-4.500zM16.700 6v13" stroke="#fff" /></Svg>
      <Svg className="ml-[10px]" w={20} h={18}><path d="M1 6h3l5-4.500v15L4 12H1zM12 6c1.500 2 1.500 4 0 6M14.500 3.500c3 3.500 3 7.500 0 11M17 1.500c4 5 4 10 0 15" stroke="#fff" /></Svg>
      <div className="ml-[20px] flex flex-col items-end pb-[2px] text-[14.500px] leading-[20px]">
        <Fit w={36}>21:57</Fit>
        <Fit w={81}>13 Feb 2025</Fit>
      </div>
      <svg className="ml-[12px]" width="18" height="20" viewBox="0 0 18 20">
        <path d="M1 16c2-1 1-5 2-8 1-4 6-5.500 9-4l4 7v3l1.500 2zM6 17.500h6c-1 3-5 3-6 0z" fill="#fff" />
        <path d="M5.500 8h4L6 12.500h4M13 1h3.500L13 5h4" fill="none" stroke="#20252d" strokeWidth="1.400" /><path d="M13 1h3.500L13 5h4" fill="none" stroke="#fff" />
      </svg>
    </div>
  );
}

export default function App() {
  return (
    <div className={`flex h-[1439px] w-[2559px] flex-col overflow-hidden bg-[#08090b] bg-[radial-gradient(500px_450px_at_620px_330px,rgba(50,8,8,0.35),transparent),radial-gradient(450px_900px_at_250px_600px,rgba(6,22,12,0.35),transparent),radial-gradient(500px_500px_at_2050px_100px,rgba(8,28,18,0.3),transparent),radial-gradient(600px_900px_at_1950px_600px,rgba(8,14,26,0.5),transparent),radial-gradient(700px_500px_at_1200px_100px,rgba(8,8,20,0.5),transparent)] ${UI}`}>
      <TitleBar />
      <TabBar />
      <Ribbon />
      <Workspace />
      <StatusBar />
      <div className="flex h-[68px] shrink-0 items-center bg-[linear-gradient(90deg,#2f3541_0px,#2c323d_70px,#1f2329_150px,#1b1e26_260px,#1b1e26_410px,#28404c_470px,#3a647e_520px,#5a93aa_580px,#7599aa_620px,#7295a8_665px,#3f8fa8_715px,#3089a3_765px,#27657d_810px,#29414f_870px,#313640_960px,#33343e_1030px,#292c37_1120px,#2b3038_1300px,#2c333c_1500px,#272b34_1640px,#1d202a_1760px,#1d2128_2000px,#29303a_2200px,#2b323c_2350px,#20252e_2559px)]">
        <Dock />
        <Tray />
      </div>
    </div>
  );
}
